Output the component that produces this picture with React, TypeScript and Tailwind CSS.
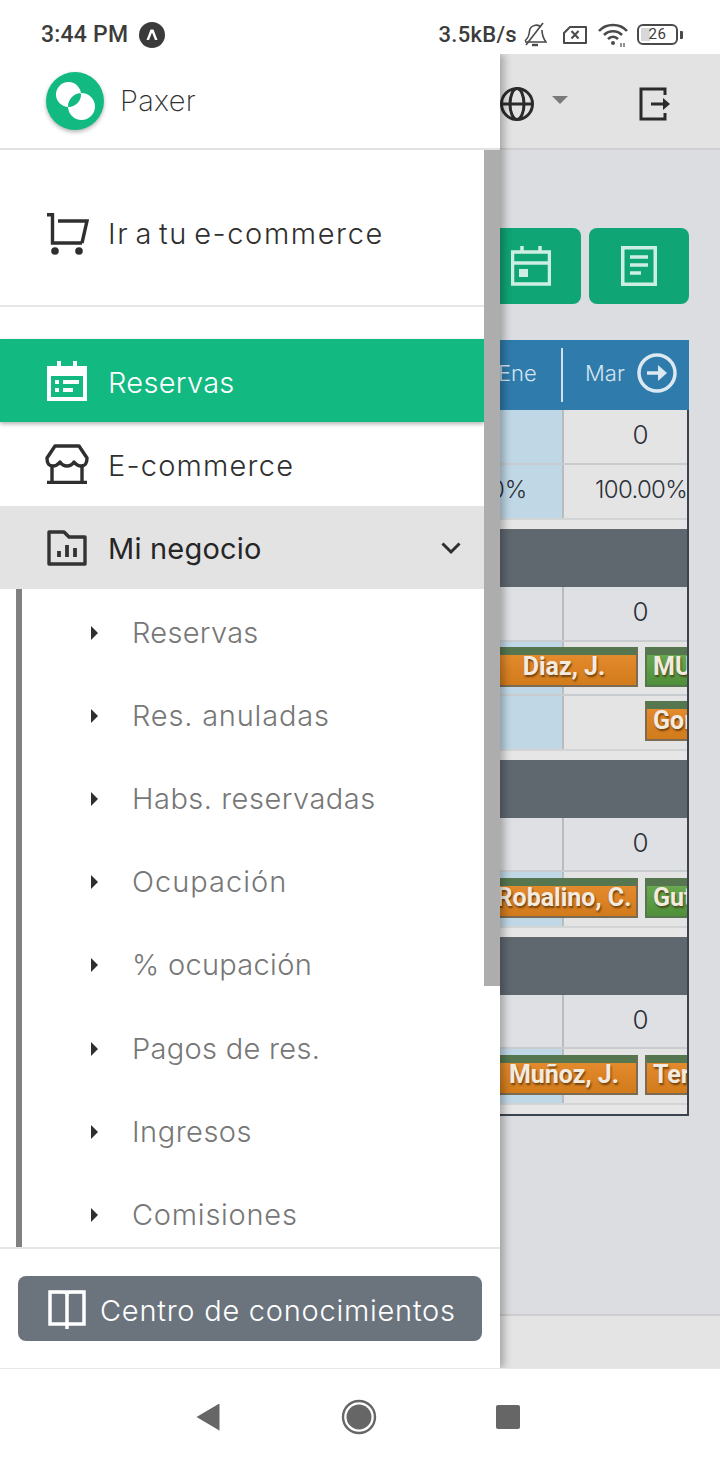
import React from "react";

const sans = "font-['Inter','Liberation_Sans',sans-serif]";
const road = "font-['Roboto','Liberation_Sans',sans-serif]";

function StatusBar() {
  return (
    <div className={`h-[54px] shrink-0 bg-white flex items-center pl-[41px] pr-[37px] pt-[15px] text-[#3c3c3c] ${road}`}>
      <span className="text-[23px] font-medium leading-none tracking-[0.2px]">3:44 PM</span>
      <svg className="ml-[11px]" width="26" height="26" viewBox="0 0 26 26">
        <circle cx="13" cy="13" r="13" fill="#3a3a3a" />
        <path d="M7.5 18 L11.5 7.5 L14.5 7.5 L18.5 18 L16 18 L13 10.5 L10 18 Z" fill="#fff" />
      </svg>
      <span className="ml-auto text-[22px] font-medium leading-none tracking-[0.3px]">3.5kB/s</span>
      <svg className="ml-[6px]" width="24" height="26" viewBox="0 0 24 26" fill="none" stroke="#4a4a4a" strokeWidth="1.6">
        <path d="M2 19 C6 15 6 13 6.5 9 C7 4 14 1 18 5 M19 8 C19 13 20 16 23 20 L2 20" />
        <path d="M3 23 L20 1" />
        <path d="M9 23 L15 23" strokeWidth="2.4" />
      </svg>
      <svg className="ml-[15px]" width="26" height="20" viewBox="0 0 26 20" fill="none" stroke="#4a4a4a" strokeWidth="2">
        <path d="M8 2 H24 V18 H2 V8 Z" strokeLinejoin="round" />
        <path d="M9.5 6 L16.5 13.5 M16.5 6 L9.5 13.5" />
      </svg>
      <svg className="ml-[10px]" width="30" height="24" viewBox="0 0 30 24" fill="none" stroke="#4a4a4a" strokeWidth="2.6">
        <path d="M1 8 C8 0 22 0 29 8" />
        <path d="M6 12 C11 7 19 7 24 12" />
        <path d="M10 16 C13 13 17 13 20 16" />
        <circle cx="15" cy="20" r="2" fill="#4a4a4a" stroke="none" />
        <path d="M23 20 V24 M26 20 V24" strokeWidth="1.2" />
      </svg>
      <div className="ml-[9px] flex items-center">
        <div className="relative w-[41px] h-[21px] rounded-[6px] border-2 border-[#4a4a4a] flex items-center justify-center">
          <div className="absolute left-[2px] top-[2px] bottom-[2px] w-[9px] bg-[#d8d8d8]" />
          <span className="relative text-[15px] leading-none tracking-[0.5px]">26</span>
        </div>
        <div className="ml-[2px] w-[3px] h-[8px] bg-[#4a4a4a] rounded-r-[1px]" />
      </div>
    </div>
  );
}

function NavBar() {
  return (
    <div className="h-[96px] shrink-0 bg-white border-t border-[#e8e8e8] relative z-20 flex items-center pl-[196px]">
      <svg width="24" height="28" viewBox="0 0 24 28"><path d="M23.5 1 V27 a0.5 0.5 0 0 1 -1 0 L0.5 14 L22.5 1 Z" fill="#666" /></svg>
      <svg className="ml-[121px]" width="36" height="36" viewBox="0 0 36 36">
        <circle cx="18" cy="18" r="16" fill="none" stroke="#666" strokeWidth="2.4" />
        <circle cx="18" cy="18" r="12.5" fill="#666" />
      </svg>
      <div className="ml-[119px] w-[24px] h-[24px] rounded-[2px] bg-[#666]" />
    </div>
  );
}

function Chip({ label, tone, second }: { label: string; tone: "orange" | "green"; second?: boolean }) {
  return (
    <div
      className={`w-[148px] h-[40px] shrink-0 border-2 border-t-[8px] border-t-[#55764e] overflow-hidden flex items-center ${road} text-[25px] font-bold text-[#f3ebe0] [text-shadow:1px_2px_2px_rgba(60,30,0,0.65)] whitespace-nowrap ${
        tone === "orange" ? "border-[#7d6a52] bg-gradient-to-b from-[#e38a2c] to-[#d27b1b]" : "border-[#55764e] bg-gradient-to-b from-[#6aa84f] to-[#4f8f3a]"
      } ${second ? "justify-start pl-[6px]" : "justify-center"}`}
    >
      <span className="mb-[6px]">{label}</span>
    </div>
  );
}

function Row({ left, right, children, h, border, leftText }: { left: string; right: string; children?: React.ReactNode; h: string; border?: boolean; leftText?: string }) {
  return (
    <div className={`${h} flex ${border ? "border-b-2 border-[#c9ccce]" : ""}`}>
      <div className={`w-[564px] border-r-2 border-[#b9bcbe] pl-[490px] pb-[4px] flex items-center text-[24px] font-light text-[#2b3039] ${left}`}>{leftText}</div>
      <div className={`flex-1 flex items-center pb-[4px] font-light text-[#2b3039] ${right} overflow-hidden whitespace-nowrap`}>{children}</div>
    </div>
  );
}

const zero = "bg-[#dfe0e3] justify-center pl-[30px] text-[26px]";

function Section({ chips, extra, first, chipTop }: { chips: React.ReactNode; extra?: React.ReactNode; first: string; chipTop: string }) {
  return (
    <div>
      <div className="h-[58px] bg-[#5f676f]" />
      <Row h={first} left="bg-[#dfe0e3]" right={zero} border>0</Row>
      <div className="relative">
        <Row h="h-[54px]" left="bg-[#c0d8e6]" right="bg-[#e4e4e4]" border={!!extra} />
        <div className={`absolute left-[490px] right-0 ${chipTop} flex gap-[7px] overflow-hidden`}>{chips}</div>
      </div>
      {extra}
      <div className="h-[11px] bg-[#e6e6e6] border-t-2 border-[#d2d4d6]" />
    </div>
  );
}

function Background() {
  return (
    <div className={`h-full flex flex-col bg-[#dcdde0] ${sans}`}>
      <div className="h-[96px] shrink-0 bg-[#e3e3e3] border-b-2 border-[#cfcfcf] flex items-center pl-[499px] pt-[5px]">
        <svg width="36" height="36" viewBox="0 0 36 36" fill="none" stroke="#2b2b2b" strokeWidth="3">
          <circle cx="18" cy="18" r="15.5" />
          <ellipse cx="18" cy="18" rx="7" ry="15.5" />
          <path d="M2.5 18 H33.5" />
        </svg>
        <div className="ml-[17px] w-0 h-0 border-l-[8px] border-r-[8px] border-t-[8px] border-l-transparent border-r-transparent border-t-[#7a7a7a] mb-[8px]" />
        <svg className="ml-[71px]" width="32" height="34" viewBox="0 0 32 34" fill="none" stroke="#2b2b2b" strokeWidth="3">
          <path d="M26 8 V2 H2 V32 H26 V26" />
          <path d="M12 17 H24" />
          <path d="M24 11 L31 17 L24 23 Z" fill="#2b2b2b" stroke="none" />
        </svg>
      </div>
      <div className="flex justify-end gap-[8px] pr-[31px] pt-[78px]">
        <div className="w-[100px] h-[76px] rounded-[8px] bg-[#10a574] flex items-center justify-center">
          <svg width="40" height="40" viewBox="0 0 40 40" fill="none" stroke="#cdeee2" strokeWidth="3.5">
            <path d="M1.5 6 H38.5 V38 H1.5 Z" />
            <path d="M1.5 17 H38.5" />
            <path d="M11 0 V7 M29 0 V7" />
            <rect x="8" y="23" width="9" height="8" fill="#cdeee2" stroke="none" />
          </svg>
        </div>
        <div className="w-[100px] h-[76px] rounded-[8px] bg-[#10a574] flex items-center justify-center">
          <svg width="36" height="40" viewBox="0 0 36 40" fill="none" stroke="#cdeee2" strokeWidth="3.5">
            <rect x="1.75" y="1.75" width="32.5" height="36.5" />
            <path d="M9 11 H27 M9 19 H27 M9 27 H20" />
          </svg>
        </div>
      </div>
      <div className="mt-[36px] w-[689px]">
        <div className="h-[70px] bg-[#2f7bab] flex items-center text-[22px] font-light text-[#d5e5f0]">
          <span className="ml-[498px] w-[63px] mb-[4px]">Ene</span>
          <div className="w-[2px] h-[54px] bg-[#cfe0ec]" />
          <span className="ml-[22px] mb-[4px]">Mar</span>
          <svg className="ml-[12px] mb-[4px]" width="40" height="40" viewBox="0 0 40 40" fill="none" stroke="#dce9f2">
            <circle cx="20" cy="20" r="18" strokeWidth="3.5" />
            <path d="M10 20 H24" strokeWidth="3.5" />
            <path d="M21 12 L30 20 L21 28 Z" fill="#dce9f2" stroke="none" />
          </svg>
        </div>
        <div className="border-r-2 border-b-2 border-[#3a4450]">
          <Row h="h-[55px]" left="bg-[#c0d8e6]" right="bg-[#e4e4e4] justify-center pl-[30px] text-[26px]" border>0</Row>
          <Row h="h-[53px]" left="bg-[#c0d8e6]" leftText="0%" right="bg-[#e4e4e4] justify-end text-[24px] tracking-[-0.7px]">100.00%</Row>
          <div className="h-[11px] bg-[#e6e6e6] border-t-2 border-[#d2d4d6]" />
          <Section
            first="h-[55px]"
            chipTop="top-[5px]"
            chips={<><Chip label="Diaz, J." tone="orange" /><Chip label="MU" tone="green" second /></>}
            extra={
              <div className="relative">
                <Row h="h-[53px]" left="bg-[#c0d8e6]" right="bg-[#e4e4e4]" />
                <div className="absolute left-[645px] right-0 top-[5px] flex overflow-hidden">
                  <Chip label="Gor" tone="orange" second />
                </div>
              </div>
            }
          />
          <Section first="h-[54px]" chipTop="top-[6px]" chips={<><Chip label="Robalino, C." tone="orange" /><Chip label="Gut" tone="green" second /></>} />
          <Section first="h-[54px]" chipTop="top-[6px]" chips={<><Chip label="Muñoz, J." tone="orange" /><Chip label="Ter" tone="orange" second /></>} />
        </div>
      </div>
      <div className="mt-auto h-[54px] bg-[#e4e4e4] border-t-2 border-[#cdcdcd]" />
    </div>
  );
}

function MenuIcon({ kind, color }: { kind: string; color: string }) {
  if (kind === "cart")
    return (
      <svg width="42" height="42" viewBox="0 0 42 42" fill="none" stroke={color} strokeWidth="3.4">
        <path d="M0 1.7 H5.5 V30 H35" />
        <path d="M11 8 H40 L35 30" />
        <circle cx="8" cy="38" r="3.8" fill={color} stroke="none" />
        <circle cx="32" cy="38" r="3.8" fill={color} stroke="none" />
      </svg>
    );
  if (kind === "calendar")
    return (
      <svg width="40" height="40" viewBox="0 0 40 40" fill="none">
        <path d="M0 5 H10 V0 H14 V5 H26 V0 H30 V5 H40 V40 H0 Z" fill={color} />
        <path d="M4 15 H36 V36 H4 Z" fill="#12b981" />
        <path d="M8 19 H12 V23 H8 Z M16 19 H32 V23 H16 Z M8 27 H12 V31 H8 Z M16 27 H26 V31 H16 Z" fill={color} />
      </svg>
    );
  if (kind === "store")
    return (
      <svg width="44" height="40" viewBox="0 0 44 40" fill="none" stroke={color} strokeWidth="3.4">
        <path d="M10 2 H34 L42 14 C42 20 40 22 36 22 C32 22 30 19 29 18 C27 21 25 22 22 22 C19 22 17 21 15 18 C14 19 12 22 8 22 C4 22 2 20 2 14 Z" strokeLinejoin="round" />
        <path d="M7 22 V38 M37 22 V38" />
        <path d="M2 38.5 H42" strokeWidth="3.6" />
      </svg>
    );
  return (
    <svg width="40" height="36" viewBox="0 0 40 36" fill="none" stroke={color} strokeWidth="3.4">
      <path d="M2 2 H17 L22 7 H38 V34 H2 Z" strokeLinejoin="round" />
      <path d="M12 21 V27 M20 15 V27 M28 18 V27" strokeWidth="3.8" />
    </svg>
  );
}

const subs: [string, string, string][] = [
  ["Reservas", "h-[83px]", "tracking-[0.3px]"],
  ["Res. anuladas", "h-[83px]", "tracking-[0.8px]"],
  ["Habs. reservadas", "h-[83px]", "tracking-[0.5px]"],
  ["Ocupación", "h-[83px]", "tracking-[1px]"],
  ["% ocupación", "h-[84px]", "tracking-[0.3px]"],
  ["Pagos de res.", "h-[83px]", "tracking-[0.3px]"],
  ["Ingresos", "h-[83px]", "tracking-[0.5px]"],
  ["Comisiones", "h-[83px]", "tracking-[0.75px]"],
];

function Drawer() {
  return (
    <aside className={`absolute left-0 top-0 bottom-0 w-[500px] bg-white flex flex-col shadow-[4px_0_8px_rgba(0,0,0,0.28)] ${sans} font-light text-[#2f2f2f]`}>
      <div className="h-[96px] shrink-0 border-b-2 border-[#e2e2e2] flex items-center pl-[46px]">
        <div className="w-[58px] h-[58px] rounded-full bg-[#12b981] shadow-[0_2px_4px_rgba(0,0,0,0.3)] flex items-center justify-center">
          <svg width="40" height="38" viewBox="0 0 40 38">
            <path
              fillRule="evenodd"
              fill="#fff"
              d="M1 12.5 a12.5 12.5 0 1 0 25 0 a12.5 12.5 0 1 0 -25 0 Z M13 24.5 a13.5 13.5 0 1 0 27 0 a13.5 13.5 0 1 0 -27 0 Z"
            />
          </svg>
        </div>
        <span className="ml-[16px] mb-[2px] text-[29px] leading-none font-extralight tracking-[0.3px]">Paxer</span>
      </div>
      <div className="flex-1 min-h-0 flex">
        <div className="w-[484px] overflow-hidden">
          <div className="h-[157px] border-b-2 border-[#e6e6e6] flex items-center pl-[47px] pt-[12px]">
            <MenuIcon kind="cart" color="#2f2f2f" />
            <span className="ml-[19px] text-[29px] tracking-[1.6px] [word-spacing:-3.6px]">Ir a tu e-commerce</span>
          </div>
          <div className="h-[83px] mt-[32px] bg-[#12b981] shadow-[0_2px_4px_rgba(0,0,0,0.3)] relative flex items-center pl-[47px] text-white">
            <MenuIcon kind="calendar" color="#ffffff" />
            <span className="ml-[21px] mt-[4px] text-[29px] tracking-[0.3px]">Reservas</span>
          </div>
          <div className="h-[84px] flex items-center pl-[45px]">
            <MenuIcon kind="store" color="#2f2f2f" />
            <span className="ml-[19px] mt-[4px] text-[29px] tracking-[1.2px]">E-commerce</span>
          </div>
          <div className="h-[83px] bg-[#e3e3e3] flex items-center pl-[47px] pr-[22px] text-[#262626]">
            <MenuIcon kind="folder" color="#333333" />
            <span className="ml-[21px] mt-[2px] text-[29px] font-normal tracking-[0.2px]">Mi negocio</span>
            <svg className="ml-auto" width="22" height="14" viewBox="0 0 22 14" fill="none" stroke="#2f2f2f" strokeWidth="3"><path d="M2.5 2.5 L11 11 L19.5 2.5" /></svg>
          </div>
          <div className="ml-[16px] border-l-[6px] border-[#808080]">
            {subs.map(([s, h, t]) => (
              <div key={s} className={`${h} flex items-center pl-[69px] pt-[4px] text-[#777777]`}>
                <div className="w-0 h-0 border-y-[7px] border-l-[7px] border-y-transparent border-l-[#2f2f2f]" />
                <span className={`ml-[34px] text-[29px] ${t}`}>{s}</span>
              </div>
            ))}
          </div>
        </div>
        <div className="w-[16px] bg-white">
          <div className="h-[836px] bg-[#adadad]" />
        </div>
      </div>
      <div className="h-[121px] shrink-0 border-t-2 border-[#e6e6e6] px-[18px] pt-[27px]">
        <div className="h-[65px] rounded-[8px] bg-[#6b747d] flex items-center pl-[30px] text-white">
          <svg width="38" height="40" viewBox="0 0 38 40" fill="none" stroke="#fff" strokeWidth="3.5">
            <path d="M2 3 H36 V35 H2 Z" />
            <path d="M19 3 V40" />
            <path d="M2 3 H14 C17 3 19 5 19 7 C19 5 21 3 24 3 H36" strokeWidth="2.5" />
          </svg>
          <span className="ml-[14px] mt-[4px] text-[29px] tracking-[0.75px]">Centro de conocimientos</span>
        </div>
      </div>
    </aside>
  );
}

export default function App() {
  return (
    <div className="w-[720px] h-[1464px] flex flex-col overflow-hidden bg-white">
      <StatusBar />
      <main className="flex-1 min-h-0 relative overflow-hidden">
        <Background />
        <Drawer />
      </main>
      <NavBar />
    </div>
  );
}
